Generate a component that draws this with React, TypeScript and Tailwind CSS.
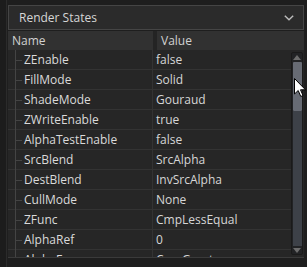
import React from "react";

const rows: [string, string][] = [
  ["ZEnable", "false"],
  ["FillMode", "Solid"],
  ["ShadeMode", "Gouraud"],
  ["ZWriteEnable", "true"],
  ["AlphaTestEnable", "false"],
  ["SrcBlend", "SrcAlpha"],
  ["DestBlend", "InvSrcAlpha"],
  ["CullMode", "None"],
  ["ZFunc", "CmpLessEqual"],
  ["AlphaRef", "0"],
  ["AlphaFunc", "CmpGreater"],
];

export default function App() {
  return (
    <div
      className="relative w-[307px] h-[267px] bg-[#1e1e1e] overflow-hidden flex text-[12px] leading-none"
      style={{ fontFamily: '"Open Sans", "Noto Sans", sans-serif' }}
    >
      <div className="w-[7px] h-full bg-[#1c1c1c] border-r border-[#2b2b2b]" />
      <div className="flex-1 flex flex-col mr-[3px] ml-[1px]">
        <div className="h-[5px] shrink-0" />
        <div className="h-[25px] shrink-0 border border-[#454545] bg-[#2b2b2b] flex items-center justify-between pl-[10px] pr-[9px] text-[#d6d6d6]">
          <span>Render States</span>
          <svg width="10" height="6" viewBox="0 0 10 6">
            <path d="M0.8 0.8 L5 4.8 L9.2 0.8" fill="none" stroke="#bdbdbd" strokeWidth="1.4" />
          </svg>
        </div>
        <div className="h-[1px] shrink-0" />
        <div className="flex-1 flex flex-col bg-[#262626] min-h-0">
          <div className="h-[19px] shrink-0 flex bg-[#313131] text-[#d2d2d2]">
            <div className="w-[145px] flex items-center pl-[4px]">Name</div>
            <div className="w-[4px] bg-[#242424]" />
            <div className="flex-1 flex items-center pl-[4px]">Value</div>
          </div>
          <div className="flex-1 flex min-h-0 border-b border-[#3a3a3a]">
            <div className="flex-1 flex flex-col overflow-hidden">
              {rows.map(([n, v], i) => (
                <div key={i} className="h-[20px] shrink-0 flex border-b border-[#333333]">
                  <div className="w-[145px] relative flex items-center pl-[16px] text-[#dadada] border-r border-[#333333]">
                    <div className="absolute left-[7px] top-0 bottom-[-1px] w-px bg-[#444444]" />
                    <div className="absolute left-[7px] top-[10px] w-[7px] h-px bg-[#444444]" />
                    <span>{n}</span>
                  </div>
                  <div className="flex-1 flex items-center pl-[3px] text-[#d6d6d6]">{v}</div>
                </div>
              ))}
            </div>
            <div className="w-[13px] shrink-0 flex flex-col items-center py-[2px] pr-[1px]">
              <div className="w-[12px] flex-1 rounded-[2px] bg-[#222325] border border-[#1a1a1a] flex flex-col items-center">
                <div className="h-[8px] w-full flex items-center justify-center">
                  <svg width="8" height="5" viewBox="0 0 8 5">
                    <path d="M0 5 L4 0 L8 5 Z" fill="#6c6c6c" />
                  </svg>
                </div>
                <div className="w-[9px] flex-1 flex flex-col">
                  <div className="h-[49px] mt-[1px] bg-[#676b74] rounded-[1px]" />
                  <div className="flex-1 bg-[#3d4148]" />
                </div>
                <div className="h-[8px] w-full flex items-center justify-center">
                  <svg width="8" height="5" viewBox="0 0 8 5">
                    <path d="M0 0 L4 5 L8 0 Z" fill="#6c6c6c" />
                  </svg>
                </div>
              </div>
            </div>
          </div>
          <div className="h-[9px] shrink-0 bg-[#1e1e1e]" />
        </div>
      </div>
      <svg
        className="absolute left-[294px] top-[78px]"
        width="13"
        height="20"
        viewBox="0 0 13 20"
      >
        <path
          d="M0.5 0.5 L0.5 16 L4.2 12.5 L6.8 18.5 L9 17.5 L6.5 11.8 L11.5 11.8 Z"
          fill="#ffffff"
          stroke="#000000"
          strokeWidth="1"
        />
      </svg>
    </div>
  );
}
